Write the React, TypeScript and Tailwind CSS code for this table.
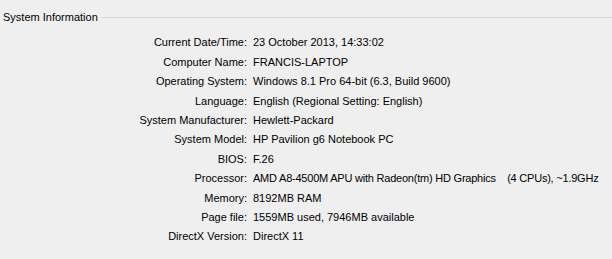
const rows: [string, string][] = [
  ["Current Date/Time:", "23 October 2013, 14:33:02"],
  ["Computer Name:", "FRANCIS-LAPTOP"],
  ["Operating System:", "Windows 8.1 Pro 64-bit (6.3, Build 9600)"],
  ["Language:", "English (Regional Setting: English)"],
  ["System Manufacturer:", "Hewlett-Packard"],
  ["System Model:", "HP Pavilion g6 Notebook PC"],
  ["BIOS:", "F.26"],
  ["Processor:", "AMD A8-4500M APU with Radeon(tm) HD Graphics    (4 CPUs), ~1.9GHz"],
  ["Memory:", "8192MB RAM"],
  ["Page file:", "1559MB used, 7946MB available"],
  ["DirectX Version:", "DirectX 11"],
];

export default function App() {
  return (
    <div
      className="w-[612px] h-[259px] bg-[#efefef] text-black text-[11px] overflow-hidden"
      style={{ fontFamily: "'Liberation Sans', Tahoma, sans-serif" }}
    >
      <div className="flex items-center pt-[10px] pl-[3px]">
        <span className="leading-[14px]">System Information</span>
        <div className="flex-1 ml-[3px] h-px bg-[#dadada]" />
      </div>
      <div className="mt-[9px] flex flex-col">
        {rows.map(([label, value]) => (
          <div key={label} className="flex h-[19.4px] items-center">
            <div className="w-[247px] text-right">{label}</div>
            <div
              className={
                label === "Processor:"
                  ? "pl-[6px] whitespace-pre tracking-[-0.22px]"
                  : "pl-[6px] whitespace-pre"
              }
            >
              {value}
            </div>
          </div>
        ))}
      </div>
    </div>
  );
}
